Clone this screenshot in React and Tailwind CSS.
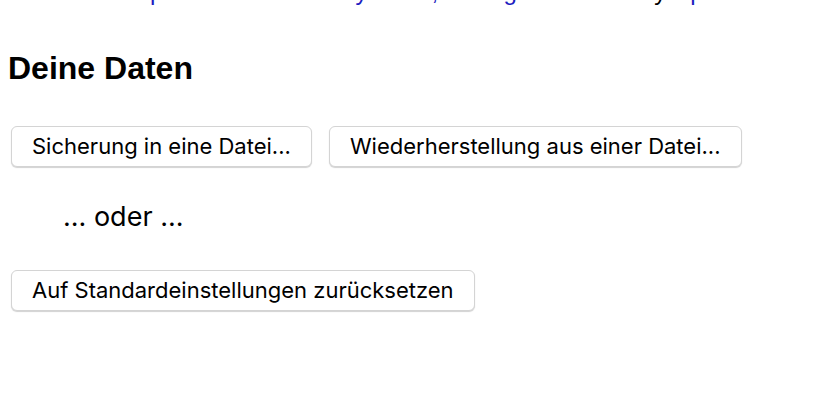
import React from "react";

function Knopf({ children }) {
  return (
    <button className="h-[41px] rounded-[6px] border border-[#d4d4d4] bg-white px-[20px] text-[22px] text-black shadow-[0_1px_1px_rgba(0,0,0,0.18)] font-['Inter','Noto_Sans',sans-serif]">
      {children}
    </button>
  );
}

export default function App() {
  return (
    <main className="h-[400px] w-[830px] overflow-hidden bg-white pl-[8px]">
      {/* abgeschnittene Zeile vom Abschnitt darüber */}
      <p className="mt-[-22px] h-[28px] whitespace-nowrap pl-[142px] text-[24px] leading-[28px] text-[#1c1cbf] font-['Liberation_Sans',Arial,sans-serif]">
        plementation des Systems, Anzeige der Datei <span className="text-black">by</span> Update Dossiers Sicherung
      </p>

      <h2 className="mt-[43px] text-[32px] font-bold leading-[38px] text-black font-['Liberation_Sans',Arial,sans-serif]">
        Deine Daten
      </h2>

      <div className="mt-[39px] flex gap-[17px] pl-[3px]">
        <Knopf>Sicherung in eine Datei...</Knopf>
        <Knopf>Wiederherstellung aus einer Datei...</Knopf>
      </div>

      <p className="mt-[34px] pl-[55px] text-[27px] leading-[32px] text-black font-['Inter','Noto_Sans',sans-serif]">
        ... oder ...
      </p>

      <div className="mt-[37px] pl-[3px]">
        <Knopf>Auf Standardeinstellungen zurücksetzen</Knopf>
      </div>
    </main>
  );
}
